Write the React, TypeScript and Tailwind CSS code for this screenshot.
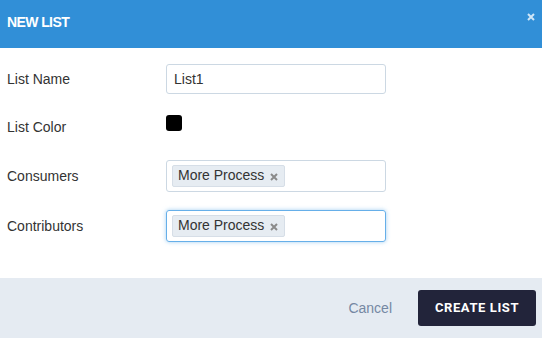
function Tag({ label }: { label: string }) {
  return (
    <span className="flex items-center h-[22px] pl-[5px] pr-[6px] gap-[6px] bg-[#e6ecf2] border border-[#d6dee7] rounded-[2px] text-[14px] text-[#333] leading-none">
      <span className="mt-[-3px]">{label}</span>
      <svg width="8" height="8" viewBox="0 0 8 8" className="mt-[1px]">
        <path d="M1 1L7 7M7 1L1 7" stroke="#8a8a8a" strokeWidth="2" />
      </svg>
    </span>
  );
}

export default function App() {
  return (
    <div className="w-[542px] h-[338px] flex flex-col bg-white font-['Liberation_Sans',Arial,sans-serif] text-[#333]">
      <div className="h-12 shrink-0 bg-[#318fd7] flex items-start justify-between pl-[7px] pr-[7px] pt-[12px]">
        <span className="text-white font-bold text-[14px] tracking-[-0.6px]">NEW LIST</span>
        <svg width="8" height="8" viewBox="0 0 8 8" className="mt-[1px]">
          <path d="M1 1L7 7M7 1L1 7" stroke="#cfe6f7" strokeWidth="2" />
        </svg>
      </div>

      <div className="h-[230px] shrink-0 pt-[7px] px-[7px] text-[14px]">
        <div className="flex items-center h-12">
          <span className="w-[159px]">List Name</span>
          <div className="w-[220px] h-[30px] border border-[#ccd8e3] rounded-[3px] flex items-center px-[7px]">
            List1
          </div>
        </div>
        <div className="flex h-12">
          <span className="w-[159px] self-center">List Color</span>
          <div className="w-4 h-4 mt-[12px] bg-black rounded-[3px]" />
        </div>
        <div className="flex items-center h-[50px]">
          <span className="w-[159px]">Consumers</span>
          <div className="w-[220px] h-[32px] border border-[#ccd8e3] rounded-[3px] flex items-center px-[5px]">
            <Tag label="More Process" />
          </div>
        </div>
        <div className="flex items-center h-[50px]">
          <span className="w-[159px]">Contributors</span>
          <div className="w-[220px] h-[32px] border border-[#66afe9] rounded-[3px] flex items-center px-[5px] shadow-[0_0_4px_rgba(102,175,233,0.6)]">
            <Tag label="More Process" />
          </div>
        </div>
      </div>

      <div className="flex-1 bg-[#e5ebf2] flex items-center justify-end pr-[6px] gap-[26px]">
        <button className="text-[#7588a3] text-[14px]">Cancel</button>
        <button className="w-[118px] h-9 rounded-[3px] bg-[#22243a] text-white font-bold text-[13px] tracking-[0.6px] font-['Roboto',sans-serif]">
          CREATE LIST
        </button>
      </div>
    </div>
  );
}
